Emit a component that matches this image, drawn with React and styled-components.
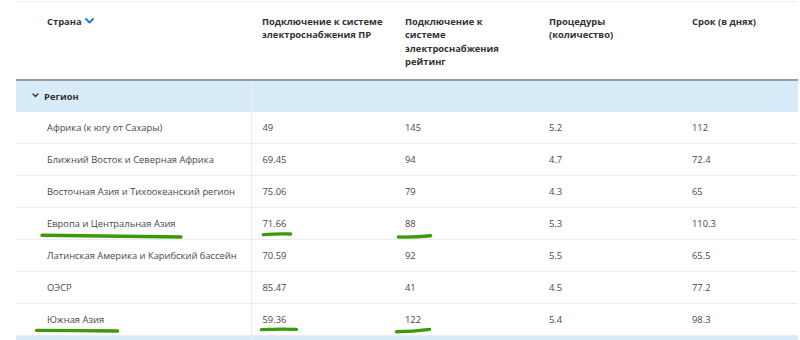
import React from "react";
import styled, { createGlobalStyle } from "styled-components";

const Global = createGlobalStyle`
  html, body { margin: 0; padding: 0; background: #fff; }
  body { font-family: "Open Sans", "Noto Sans", sans-serif; }
`;

const Page = styled.div`
  position: relative;
  width: 800px;
  height: 340px;
  overflow: hidden;
  padding: 1px 2px 0 16px;
  box-sizing: border-box;
`;

const Table = styled.table`
  width: 782px;
  border-collapse: collapse;
  table-layout: fixed;
  border-top: 1px solid #eeeeee;
`;

const HeadCell = styled.th`
  text-align: left;
  vertical-align: top;
  font-size: 9.4px;
  font-weight: 700;
  line-height: 13.4px;
  color: #333;
  height: 78px;
  box-sizing: border-box;
  padding: 13px 4px 0 ${(p) => (p.$first ? "31px" : "11px")};
  border-bottom: 2px solid #9a9a9a;
`;

const HeadLabel = styled.div`
  max-width: ${(p) => p.$max}px;
`;

const SortIcon = styled.svg`
  display: inline-block;
  vertical-align: middle;
  margin-left: 3px;
  margin-top: -2px;
`;

const GroupRow = styled.tr`
  background: #d8ebf8;
  height: 32px;
`;

const GroupCell = styled.td`
  font-size: 9.4px;
  font-weight: 700;
  color: #333;
  padding: 0 0 0 ${(p) => (p.$first ? "16px" : "11px")};
  border-right: ${(p) => (p.$first ? "1px solid #eaf3fb" : "none")};
`;

const Row = styled.tr`
  height: 32px;
  border-bottom: 1px solid #ececec;
`;

const Cell = styled.td`
  font-size: 9.4px;
  color: #484848;
  padding: 0 0 0 ${(p) => (p.$first ? "31px" : "11px")};
  border-right: ${(p) => (p.$first ? "1px solid #ececec" : "none")};
  white-space: nowrap;
  overflow: hidden;
`;

const Chevron = styled.svg`
  display: inline-block;
  vertical-align: middle;
  margin-right: 5px;
  margin-top: -2px;
`;

const Marks = styled.svg`
  position: absolute;
  left: 0;
  top: 0;
  pointer-events: none;
`;

const headers = [
  { text: "Страна", max: 200 },
  { text: "Подключение к системе электроснабжения ПР", max: 126 },
  { text: "Подключение к системе электроснабжения рейтинг", max: 108 },
  { text: "Процедуры (количество)", max: 108 },
  { text: "Срок (в днях)", max: 100 },
];

const rows = [
  ["Африка (к югу от Сахары)", "49", "145", "5.2", "112"],
  ["Ближний Восток и Северная Африка", "69.45", "94", "4.7", "72.4"],
  ["Восточная Азия и Тихоокеанский регион", "75.06", "79", "4.3", "65"],
  ["Европа и Центральная Азия", "71.66", "88", "5.3", "110.3"],
  ["Латинская Америка и Карибский бассейн", "70.59", "92", "5.5", "65.5"],
  ["ОЭСР", "85.47", "41", "4.5", "77.2"],
  ["Южная Азия", "59.36", "122", "5.4", "98.3"],
];

const widths = [235, 143, 144, 143, 117];

const strokes = [
  "M42 235.3 Q110 236 181 237",
  "M263.5 234.6 Q277 233.6 290.5 234",
  "M398.5 237 Q415 237.4 430.5 235.8",
  "M36.5 330.4 Q77 330.4 117.5 331",
  "M261.5 329.6 Q279 328.8 296.5 329.4",
  "M396.5 331.8 Q413 331.6 429.5 329.4",
];

export default function App() {
  return (
    <>
      <Global />
      <Page>
        <Table>
          <colgroup>
            {widths.map((w, i) => (
              <col key={i} style={{ width: w }} />
            ))}
          </colgroup>
          <thead>
            <tr>
              {headers.map((h, i) => (
                <HeadCell key={i} $first={i === 0}>
                  <HeadLabel $max={h.max}>
                    {h.text}
                    {i === 0 && (
                      <SortIcon width="9" height="6" viewBox="0 0 9 6">
                        <path
                          d="M1 1 L4.5 4.5 L8 1"
                          fill="none"
                          stroke="#1f78d1"
                          strokeWidth="1.8"
                          strokeLinecap="round"
                          strokeLinejoin="round"
                        />
                      </SortIcon>
                    )}
                  </HeadLabel>
                </HeadCell>
              ))}
            </tr>
          </thead>
          <tbody>
            <GroupRow>
              <GroupCell $first>
                <Chevron width="7" height="5" viewBox="0 0 7 5">
                  <path
                    d="M1 1 L3.5 3.5 L6 1"
                    fill="none"
                    stroke="#333"
                    strokeWidth="1.4"
                    strokeLinecap="round"
                    strokeLinejoin="round"
                  />
                </Chevron>
                Регион
              </GroupCell>
              <GroupCell />
              <GroupCell />
              <GroupCell />
              <GroupCell />
            </GroupRow>
            {rows.map((r, i) => (
              <Row key={i}>
                {r.map((c, j) => (
                  <Cell key={j} $first={j === 0}>
                    {c}
                  </Cell>
                ))}
              </Row>
            ))}
            <GroupRow>
              <GroupCell $first />
              <GroupCell />
              <GroupCell />
              <GroupCell />
              <GroupCell />
            </GroupRow>
          </tbody>
        </Table>
        <Marks width="800" height="340" viewBox="0 0 800 340">
          {strokes.map((d, i) => (
            <path
              key={i}
              d={d}
              fill="none"
              stroke="#3a9a0a"
              strokeWidth="3.4"
              strokeLinecap="round"
            />
          ))}
        </Marks>
      </Page>
    </>
  );
}
